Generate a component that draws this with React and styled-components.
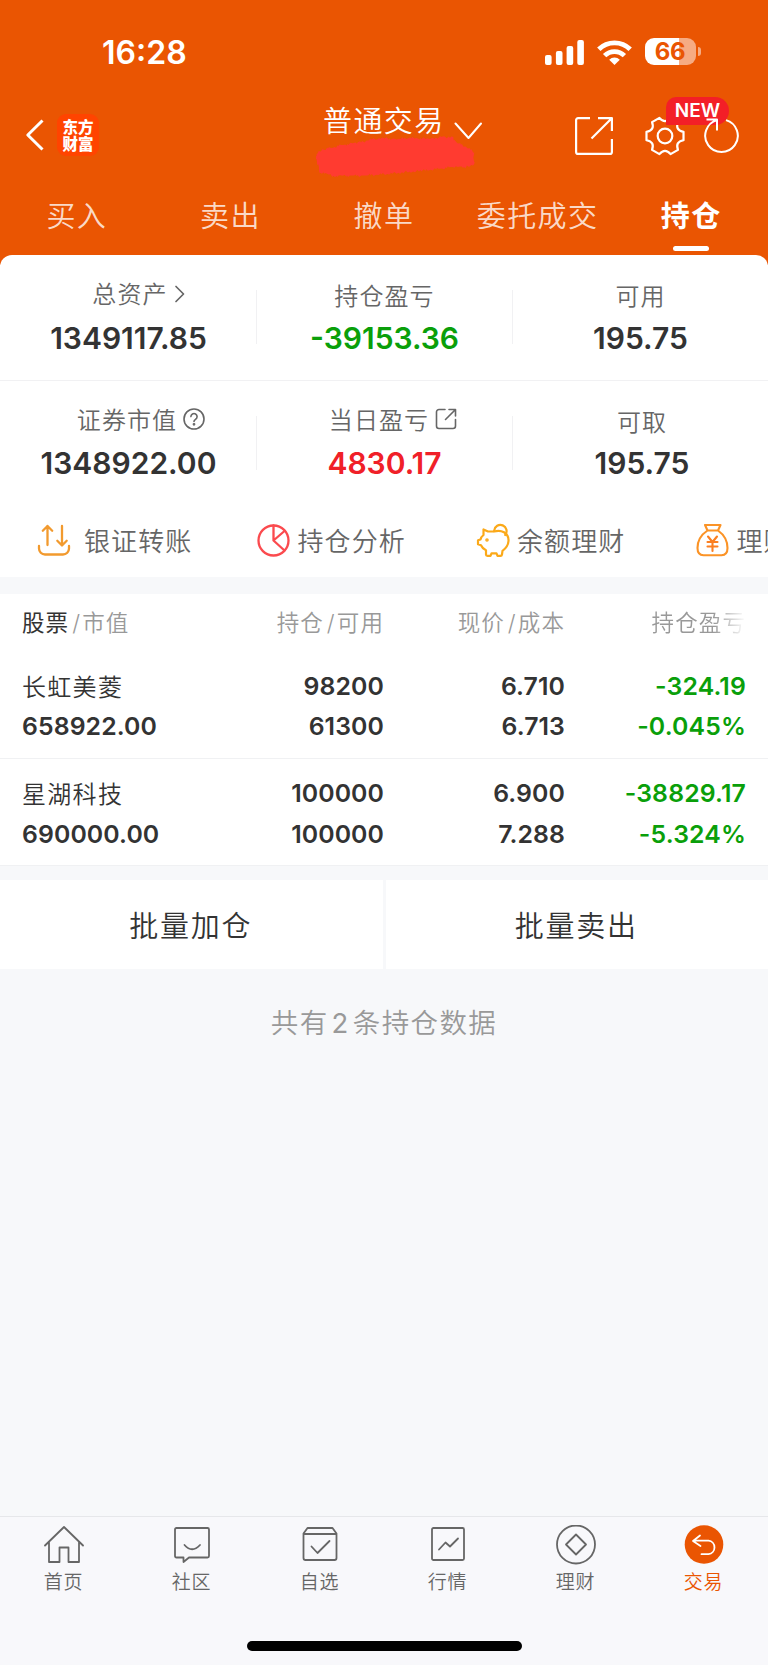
import { Fragment } from "react"
import styled, { createGlobalStyle, css } from "styled-components"

const GlobalStyle = createGlobalStyle`
  * {
    box-sizing: border-box;
  }
  body {
    margin: 0;
    background: #f7f8fa;
    color: #333;
    font-family: "Noto Sans CJK SC", sans-serif;
    font-weight: 400;
  }
`

const numeric = css`
  font-family: Inter, "Noto Sans CJK SC", sans-serif;
  font-weight: 600;
`

const Screen = styled.div`
  display: flex;
  flex-direction: column;
  width: 768px;
  height: 1665px;
  overflow: hidden;
  background: #f7f8fa;
`

const Header = styled.header`
  height: 265px;
  margin-bottom: -10px;
  flex-shrink: 0;
  background: #ea5502;
  color: #fff;
`

const StatusBar = styled.div`
  display: flex;
  align-items: center;
  justify-content: space-between;
  height: 105px;
  padding: 0 67px 0 102px;
`

const Clock = styled.span`
  ${numeric}
  font-size: 32px;
  line-height: 40px;
`

const StatusIcons = styled.div`
  display: flex;
  align-items: center;
  gap: 13px;
`

const Battery = styled.div`
  position: relative;
  display: flex;
  align-items: center;
  justify-content: center;
  width: 51px;
  height: 27px;
  margin: -2px 5px 0 0;
  padding-right: 1px;
  border-radius: 9px;
  background: linear-gradient(90deg, #fff 66%, #f6ab83 66%);
  color: #ea5502;
  font: 700 24px/27px Inter, sans-serif;
  letter-spacing: -0.3px;

  &::after {
    content: "";
    position: absolute;
    left: 53px;
    top: 9px;
    width: 3px;
    height: 9px;
    border-radius: 0 4px 4px 0;
    background: #f6ab83;
  }
`

const NavBar = styled.div`
  display: grid;
  grid-template-columns: 314px 1fr auto;
  height: 80px;
`

const NavLeft = styled.div`
  display: flex;
  align-items: center;
  gap: 13px;
  height: 60px;
  padding-left: 25px;
`

const Logo = styled.div`
  width: 42px;
  height: 42px;
  padding-top: 4px;
  border-radius: 9px;
  background: #ff4400;
  font-size: 15.5px;
  font-weight: 900;
  line-height: 17px;
  text-align: center;
`

const TitleBlock = styled.div`
  display: flex;
  flex-direction: column;
`

const Title = styled.div`
  display: flex;
  align-items: center;
  gap: 9px;
  height: 29px;
  padding-left: 9px;
  font-size: 29px;
  font-weight: 350;
  line-height: 29px;
  letter-spacing: 1.4px;
  white-space: nowrap;

  svg {
    margin-top: 22px;
  }
`

const NavRight = styled.div`
  display: flex;
  align-items: center;
  height: 62px;
  padding-right: 28px;
`

const GearWrap = styled.div`
  position: relative;
  display: flex;
  margin: 0 19px 0 32px;
`

const NewBadge = styled.span`
  position: absolute;
  left: 21px;
  top: -19px;
  width: 63px;
  height: 28px;
  border-radius: 10px 14px 14px 0;
  background: #f31f27;
  font: 600 19px/28px Inter, sans-serif;
  text-align: center;
`

const RefreshWrap = styled.div`
  position: relative;
  display: flex;
`

const Tabs = styled.nav`
  display: grid;
  grid-template-columns: repeat(5, 1fr);
  height: 70px;
`

const Tab = styled.div`
  display: flex;
  flex-direction: column;
  align-items: center;
  padding-top: 8px;
  font-size: 29px;
  line-height: 42px;
  letter-spacing: 1.4px;
  font-weight: ${({ $active }) => ($active ? 700 : 350)};
  color: ${({ $active }) => ($active ? "#fff" : "rgba(255, 255, 255, 0.8)")};

  &::after {
    content: "";
    width: 36px;
    height: 5px;
    margin-top: 11px;
    border-radius: 3px;
    background: ${({ $active }) => ($active ? "#fff" : "transparent")};
  }
`

const Panel = styled.section`
  position: relative;
  flex-shrink: 0;
  height: 322px;
  border-radius: 12px 12px 0 0;
  background: #fff;
  overflow: hidden;
`

const SummaryRow = styled.div`
  display: grid;
  grid-template-columns: repeat(3, 1fr);
  height: 125.5px;
  border-bottom: 1px solid ${({ $last }) => ($last ? "transparent" : "#f1f1f3")};
`

const SummaryCell = styled.div`
  display: flex;
  flex-direction: column;
  align-items: center;
  height: 54px;
  margin-top: 35px;
  border-left: 1px solid ${({ $first }) => ($first ? "transparent" : "#f1f1f3")};
  padding-left: ${({ $shift }) => $shift || 0}px;
`

const SummaryLabel = styled.div`
  display: flex;
  align-items: center;
  gap: 6px;
  height: 32px;
  margin-top: ${({ $icon }) => ($icon ? -12.6 : -10.6)}px;
  margin-bottom: ${({ $icon }) => ($icon ? 10.1 : 8.1)}px;
  padding-left: ${({ $icon, $nudge = 0 }) => ($icon ? 19 + $nudge : 0)}px;
  font-size: 24px;
  font-weight: 350;
  line-height: 32px;
  letter-spacing: 1.1px;
  color: #666;

  svg {
    margin-top: 1px;
  }
`

const colors = { dark: "#333", green: "#0a9f0a", red: "#f02028" }

const SummaryValue = styled.div`
  ${numeric}
  font-size: 30px;
  line-height: 36px;
  color: ${({ $tone }) => colors[$tone]};
`

const Tools = styled.div`
  display: flex;
  height: 71px;
  padding: 18px 0 0 37px;
`

const Tool = styled.div`
  display: flex;
  align-items: center;
  flex: 0 0 219.5px;
  gap: ${({ $gap }) => $gap}px;
  height: 32px;
  font-size: 26px;
  font-weight: 350;
  line-height: 32px;
  letter-spacing: 1.1px;
  white-space: nowrap;
  color: #666;
`

const Holdings = styled.section`
  flex-shrink: 0;
  margin-top: 17px;
  height: 271px;
  background: #fff;
`

const HoldingGrid = styled.div`
  display: grid;
  grid-template-columns: 203px 159px 181px 181px;
  padding: 0 22px;
`

const HoldingHead = styled(HoldingGrid)`
  height: 57px;
  font-size: 22.5px;
  font-weight: 350;
  line-height: 55px;
  letter-spacing: 1.1px;
  color: #999;
`

const HeadCell = styled.div`
  text-align: ${({ $left }) => ($left ? "left" : "right")};
  white-space: nowrap;
  ${({ $fade }) => $fade && "mask-image: linear-gradient(90deg, #000 82%, transparent);"}

  b {
    font-weight: 400;
    color: #333;
  }
  i {
    margin: 0 1px 0 3px;
    font-family: Inter, sans-serif;
    font-style: normal;
  }
`

const HoldingRow = styled(HoldingGrid)`
  height: 107.5px;
  padding-top: 14.5px;
  border-bottom: 1px solid #f0f1f3;
`

const HoldingCell = styled.div`
  ${numeric}
  font-size: 24.8px;
  line-height: 40.5px;
  letter-spacing: ${({ $tone }) => ($tone === "green" ? 0.15 : 0.1)}px;
  text-align: right;
  color: ${({ $tone }) => colors[$tone || "dark"]};
`

const StockCell = styled(HoldingCell)`
  text-align: left;
`

const StockName = styled.div`
  font-family: "Noto Sans CJK SC", sans-serif;
  font-size: 24px;
  font-weight: 350;
  letter-spacing: 1.3px;
`

const Actions = styled.div`
  display: grid;
  grid-template-columns: 1fr 1fr;
  gap: 3px;
  flex-shrink: 0;
  height: 89px;
  margin-top: 15px;
`

const ActionButton = styled.button`
  border: none;
  padding: 0 1px 2px 0;
  background: #fff;
  color: #333;
  font: 350 29px/40px "Noto Sans CJK SC", sans-serif;
  letter-spacing: 1.7px;
`

const CountNote = styled.p`
  flex: 1;
  margin: 31px 0 0;
  font-size: 27.5px;
  font-weight: 350;
  line-height: 42px;
  letter-spacing: 1.4px;
  text-align: center;
  color: #999;

  span {
    margin: 0 3px;
    font-family: Inter, sans-serif;
    font-weight: 400;
  }
`

const BottomBar = styled.nav`
  display: grid;
  grid-template-columns: repeat(6, 1fr);
  grid-template-rows: 124px 10px;
  flex-shrink: 0;
  height: 149px;
  border-top: 1px solid #e6e7ea;
  background: #f8f8fb;
`

const BottomItem = styled.div`
  display: flex;
  flex-direction: column;
  align-items: center;
  padding: 8px 1px 0 0;
  font-size: 19px;
  font-weight: 350;
  line-height: 30px;
  letter-spacing: 0.8px;
  color: ${({ $active }) => ($active ? "#ea5502" : "#666")};

  svg {
    margin-bottom: 1px;
  }
`

const HomeIndicator = styled.div`
  grid-column: 1 / -1;
  justify-self: center;
  width: 275px;
  height: 10px;
  border-radius: 5px;
  background: #000;
`

const Icon = ({ w = 40, h = w, stroke = 2, children, ...rest }) => (
  <svg
    width={w}
    height={h}
    viewBox={`0 0 ${w} ${h}`}
    fill="none"
    stroke="currentColor"
    strokeWidth={stroke}
    strokeLinecap="round"
    strokeLinejoin="round"
    {...rest}
  >
    {children}
  </svg>
)

const SignalIcon = () => (
  <Icon w={39} h={25} fill="#fff" stroke={0}>
    <rect x="0" y="15" width="6.6" height="10" rx="2" />
    <rect x="10.9" y="11" width="6.6" height="14" rx="2" />
    <rect x="21.6" y="6" width="6.6" height="19" rx="2" />
    <rect x="32.3" y="0" width="6.6" height="25" rx="2" />
  </Icon>
)

const WifiIcon = () => (
  <Icon w={35} h={25} stroke={4.8} strokeLinecap="butt">
    <path d="M1.8 9.2a22.5 22.5 0 0 1 31.4 0M7.6 15.6a14.2 14.2 0 0 1 19.8 0" />
    <path d="M17.5 25l-5.3-5.3a7.6 7.6 0 0 1 10.6 0z" fill="#fff" stroke="none" />
  </Icon>
)

// marker stroke over the account name, its outline roughened point by point
const outline = [
  [2.7, 19.3], [11, 15], [26, 11.5], [46, 8.2], [63, 4], [83, 5], [96, 4], [116, 5], [129, 2.5], [139, 3.5],
  [143, 8.5], [157, 15.3], [160, 20], [160, 30], [152, 33], [139, 33], [106, 37], [79, 39.5], [49, 41.5],
  [19, 42], [6, 37.7], [2.5, 28],
]

const scribblePoints = outline.flatMap(([x, y], i) => {
  const [nx, ny] = outline[(i + 1) % outline.length]
  const steps = Math.max(2, Math.round(Math.hypot(nx - x, ny - y) / 1.6))
  return Array.from({ length: steps }, (_, k) => {
    const t = k / steps
    const n = i * 17 + k
    const dx = Math.sin(n * 5.3) * 0.7
    const dy = Math.sin(n * 2.7) * 0.9 + Math.cos(n * 7.1) * 0.6
    return `${(x + (nx - x) * t + dx).toFixed(1)},${(y + (ny - y) * t + dy).toFixed(1)}`
  })
}).join(" ")

const Scribble = () => (
  <Icon w={164} h={46} stroke={0} fill="#ff3b30">
    <polygon points={scribblePoints} />
  </Icon>
)

// six rounded teeth joined by concave valleys
const gearPoint = (deg, r) => {
  const a = (deg * Math.PI) / 180
  return `${(20 + r * Math.cos(a)).toFixed(2)} ${(20 + r * Math.sin(a)).toFixed(2)}`
}

const gearPath = [0, 60, 120, 180, 240, 300]
  .map((deg) => `${deg ? "L" : "M"}${gearPoint(deg - 13, 19)}L${gearPoint(deg + 13, 19)}Q${gearPoint(deg + 30, 11.5)} ${gearPoint(deg + 47, 19)}`)
  .join("") + "z"

const GearIcon = () => (
  <Icon w={40} stroke={2.2}>
    <path d={gearPath} />
    <circle cx="20" cy="20" r="7.3" />
  </Icon>
)

const ShareIcon = () => (
  <Icon w={38} stroke={2.2}>
    <path d="M15 1.1H3.1a2 2 0 0 0-2 2v31.8a2 2 0 0 0 2 2h31.8a2 2 0 0 0 2-2V22M23 1.1h13.9V14M36 2L16.5 21.5" strokeLinecap="butt" />
  </Icon>
)

const RefreshIcon = () => (
  <Icon w={36} h={40} stroke={2}>
    <path d="M22 4.100a16.300 16.300 0 1 1-9 0M2.500 3.600h10.500V14.500" strokeLinecap="butt" />
  </Icon>
)

const TransferIcon = () => (
  <Icon w={34} stroke={2.3} color="#f29a2e">
    <path d="M2 23v2.500a6 6 0 0 0 6 6h18a6 6 0 0 0 6-6V23M10.500 22V3M5.800 7.700l4.700-4.700 4.700 4.700M25 3v19M20.300 17.800l4.700 4.700 4.700-4.700" />
  </Icon>
)

const PieIcon = () => (
  <Icon w={33} stroke={2.3} color="#fb4a4e">
    <circle cx="16.5" cy="16.5" r="15" />
    <path d="M16.500 1.500v15L27.500 26.500M16.500 16.500L27.500 7" />
  </Icon>
)

const PigIcon = () => (
  <Icon w={34} stroke={2.2} color="#fba919">
    <path d="M17.500 8.500H12L7.500 6.500v5.500q-2.500 2-3 4.500l-2.500.8v4l3 1q1.500 3.500 5 5v4.500q0 1 1.500 1h3l1-2.500h5l1 2.500h3q1.300 0 1.500-1.300l.5-3.700c7.500-5.500 8-14.500 1.500-18.500-2.500-1.500-6-2-10-.8" />
    <path d="M18.200 7.500a6.200 6.200 0 1 1 11 4.500" />
    <circle cx="11" cy="17" r=".7" fill="#fba919" />
  </Icon>
)

const BagIcon = () => (
  <Icon w={33} h={34} stroke={2.1} color="#fb9326">
    <path d="M9 2h15.500l-2.500 5.500H11.500zM11.500 7.500C4 12.500 1.500 18 1.500 25q0 7 6 7.200h18q6-.2 6-7.200c0-7-2.500-12.500-9.500-17.500" />
    <path d="M12 13.500l4.500 5.500 4.500-5.500M16.500 19V28M11.500 19h10M11.500 23.500h10" stroke="#fb7f21" />
  </Icon>
)

const HelpIcon = () => (
  <Icon w={22} stroke={1.6}>
    <circle cx="11" cy="11" r="10" />
    <path d="M7.900 8.600a3.100 3.100 0 1 1 4.700 2.700c-1.100.7-1.600 1.100-1.600 2.200" />
    <circle cx="11" cy="16.300" r=".6" fill="currentColor" />
  </Icon>
)

const ExternalIcon = () => (
  <Icon w={22} stroke={1.6}>
    <path d="M10 1.500H4a2.500 2.500 0 0 0-2.500 2.500v14A2.500 2.500 0 0 0 4 20.500h14a2.500 2.500 0 0 0 2.500-2.500v-6.500M14 1.500h6.500V8M20 2L10.500 11.500" />
  </Icon>
)

const ChevronIcon = () => (
  <Icon w={11} h={18} stroke={1.7}>
    <path d="M2 1.500L9.500 9 2 16.500" />
  </Icon>
)

const tabs = ["买入", "卖出", "撤单", "委托成交", "持仓"]

const summary = [
  [
    { label: "总资产", value: "1349117.85", icon: <ChevronIcon />, nudge: 1 },
    { label: "持仓盈亏", value: "-39153.36", tone: "green" },
    { label: "可用", value: "195.75" },
  ],
  [
    { label: "证券市值", value: "1348922.00", icon: <HelpIcon />, nudge: 6 },
    { label: "当日盈亏", value: "4830.17", tone: "red", icon: <ExternalIcon />, nudge: -2 },
    { label: "可取", value: "195.75", shift: 3 },
  ],
]

const tools = [
  { label: "银证转账", icon: <TransferIcon />, gap: 13 },
  { label: "持仓分析", icon: <PieIcon />, gap: 8 },
  { label: "余额理财", icon: <PigIcon />, gap: 7 },
  { label: "理财", icon: <BagIcon />, gap: 8 },
]

const holdings = [
  { name: "长虹美菱", market: "658922.00", amount: ["98200", "61300"], price: ["6.710", "6.713"], profit: ["-324.19", "-0.045%"] },
  { name: "星湖科技", market: "690000.00", amount: ["100000", "100000"], price: ["6.900", "7.288"], profit: ["-38829.17", "-5.324%"] },
]

const bottomItems = [
  {
    label: "首页",
    icon: <path d="M1 20.500L20 2l19 18.500M5 17v20h10.500V22.500h9V37H35V17" />,
  },
  {
    label: "社区",
    icon: (
      <>
        <path d="M4.500 3h31q1.500 0 1.500 1.500V31q0 1.500-1.500 1.500H17L11.500 37v-4.500h-7q-1.500 0-1.500-1.500V4.500Q3 3 4.500 3z" />
        <path d="M12.500 20q7.500 8.500 15.500 0" />
      </>
    ),
  },
  {
    label: "自选",
    icon: <path d="M7.500 3h25L36.500 8.500V33q0 2-2 2h-29q-2 0-2-2V8.500zM3.500 9h33M11.500 21.500l6 6.500L29.500 16" />,
  },
  {
    label: "行情",
    icon: (
      <>
        <rect x="4" y="3" width="32" height="32" rx="1.5" />
        <path d="M11 24.500l6.500-7 4.500 4 8-8" />
      </>
    ),
  },
  {
    label: "理财",
    icon: (
      <>
        <circle cx="20" cy="19.5" r="19" />
        <path d="M20 9.500l10 10-10 10-10-10z" />
      </>
    ),
  },
  {
    label: "交易",
    active: true,
    icon: (
      <>
        <circle cx="20" cy="19.5" r="19.3" fill="#ea5502" stroke="none" />
        <path d="M16 10.500L9 16l7.500 5M9.500 15.700H24.500a6.800 6.800 0 0 1 0 13.500H17.500" stroke="#fff" />
      </>
    ),
  },
]

const SplitHead = ({ first, second, strong, left }) => (
  <HeadCell $left={left}>
    {strong ? <b>{first}</b> : first}
    <i>/</i>
    {second}
  </HeadCell>
)

const App = () => {
  return (
    <Screen>
      <GlobalStyle />
      <Header>
        <StatusBar>
          <Clock>16:28</Clock>
          <StatusIcons>
            <SignalIcon />
            <WifiIcon />
            <Battery>66</Battery>
          </StatusIcons>
        </StatusBar>
        <NavBar>
          <NavLeft>
            <Icon w={19} h={32} stroke={3}>
              <path d="M17.500 1.500L2.800 16 17.500 30.500" strokeLinecap="butt" />
            </Icon>
            <Logo>东方<br />财富</Logo>
          </NavLeft>
          <TitleBlock>
            <Title>
              普通交易
              <Icon w={28} h={18}>
                <path d="M1.500 1.500L14.500 16 27 1.500" />
              </Icon>
            </Title>
            <Scribble />
          </TitleBlock>
          <NavRight>
            <ShareIcon />
            <GearWrap>
              <GearIcon />
              <NewBadge>NEW</NewBadge>
            </GearWrap>
            <RefreshWrap>
              <RefreshIcon />
            </RefreshWrap>
          </NavRight>
        </NavBar>
        <Tabs>
          {tabs.map((name) => (
            <Tab key={name} $active={name === "持仓"}>{name}</Tab>
          ))}
        </Tabs>
      </Header>

      <Panel>
        {summary.map((row, r) => (
          <SummaryRow key={r} $last={r === 1}>
            {row.map(({ label, value, tone = "dark", icon, shift, nudge }, i) => (
              <SummaryCell key={label} $first={i === 0} $shift={shift}>
                <SummaryLabel $icon={!!icon} $nudge={nudge}>
                  {label}
                  {icon}
                </SummaryLabel>
                <SummaryValue $tone={tone}>{value}</SummaryValue>
              </SummaryCell>
            ))}
          </SummaryRow>
        ))}
        <Tools>
          {tools.map(({ label, icon, gap }) => (
            <Tool key={label} $gap={gap}>
              {icon}
              {label}
            </Tool>
          ))}
        </Tools>
      </Panel>

      <Holdings>
        <HoldingHead>
          <SplitHead first="股票" second="市值" strong left />
          <SplitHead first="持仓" second="可用" />
          <SplitHead first="现价" second="成本" />
          <HeadCell $fade>持仓盈亏</HeadCell>
        </HoldingHead>
        {holdings.map(({ name, market, amount, price, profit }) => (
          <HoldingRow key={name}>
            <StockCell>
              <StockName>{name}</StockName>
              {market}
            </StockCell>
            {[amount, price, profit].map((pair, i) => (
              <HoldingCell key={i} $tone={i === 2 ? "green" : "dark"}>
                {pair.map((v, j) => (
                  <Fragment key={j}>
                    {v}
                    <br />
                  </Fragment>
                ))}
              </HoldingCell>
            ))}
          </HoldingRow>
        ))}
      </Holdings>

      <Actions>
        <ActionButton>批量加仓</ActionButton>
        <ActionButton>批量卖出</ActionButton>
      </Actions>
      <CountNote>共有<span>2</span>条持仓数据</CountNote>

      <BottomBar>
        {bottomItems.map(({ label, icon, active }) => (
          <BottomItem key={label} $active={active}>
            <Icon w={40} stroke={1.8}>{icon}</Icon>
            {label}
          </BottomItem>
        ))}
        <HomeIndicator />
      </BottomBar>
    </Screen>
  )
}

export default App
